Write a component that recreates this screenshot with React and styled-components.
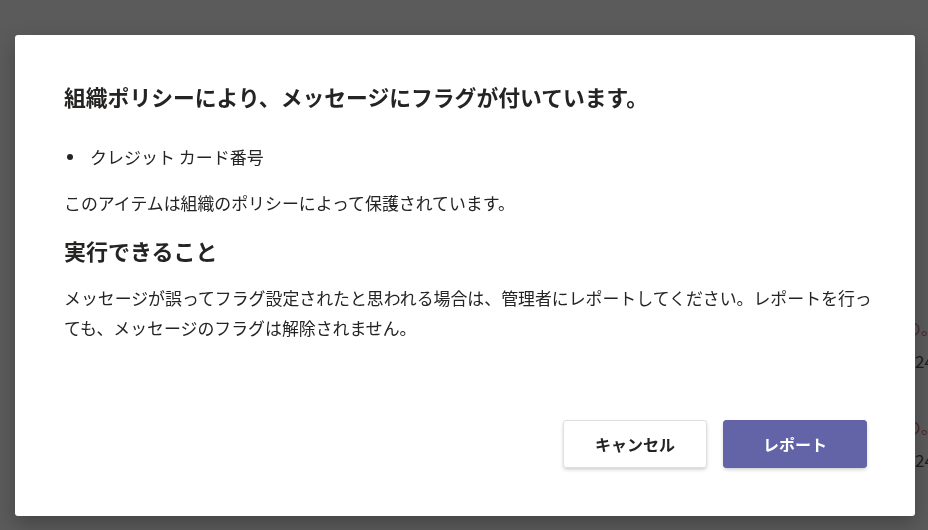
import React from "react";
import styled, { createGlobalStyle } from "styled-components";

const GlobalStyle = createGlobalStyle`
    html, body {
        margin: 0;
        padding: 0;
        width: 928px;
        height: 530px;
        overflow: hidden;
        background: #5b5b5b;
        font-family: "Noto Sans CJK JP", "Noto Sans", sans-serif;
        color: #252423;
    }
`

// dimmed page content peeking out behind the dialog
const BehindPage = styled.div`
    width: 928px;
    height: 530px;
    box-sizing: border-box;
    padding: 314px 0 0 904px;
    overflow: hidden;
    white-space: nowrap;
    font-size: 17px;
`

const BehindLine = styled.div`
    height: 33px;
    line-height: 28px;
    padding-left: ${p => p.$accent ? 0 : 11}px;
    color: ${p => p.$accent ? "#4a2a2c" : "#1c1c1c"};
    margin-bottom: ${p => p.$gap ? "33px" : "0"};
`

const Overlay = styled.div`
    position: fixed;
    inset: 0;
    box-sizing: border-box;
    padding: 35px 13px 14px 15px;
    display: flex;
`

const Dialog = styled.div`
    flex: 1;
    background: #fff;
    border-radius: 3px;
    box-shadow: 0 8px 20px rgba(0, 0, 0, .25);
    padding: 48px 48px 48px 49px;
    display: flex;
    flex-direction: column;
`

const Title = styled.h1`
    margin: 0;
    font-size: 21.8px;
    line-height: 28px;
    font-weight: 700;
`

const List = styled.ul`
    list-style: none;
    margin: 34px 0 0;
    padding: 0;
`

const ListItem = styled.li`
    font-size: 17px;
    line-height: 24px;
    padding-left: 26px;
    position: relative;

    &::before {
        content: "";
        position: absolute;
        left: 3px;
        top: 9px;
        width: 6px;
        height: 6px;
        border-radius: 50%;
        background: #252423;
    }
`

const Text = styled.p`
    margin: ${p => p.$top || 0}px -8px 0 0;
    font-size: 16.9px;
    line-height: ${p => p.$lh || 24}px;
`

const Heading = styled.h2`
    margin: 20px 0 0;
    font-size: 22px;
    line-height: 30px;
    font-weight: 700;
`

const Footer = styled.div`
    margin-top: auto;
    display: flex;
    justify-content: flex-end;
    gap: 16px;
`

const Button = styled.button`
    width: 144px;
    height: 48px;
    border-radius: 3px;
    font-family: inherit;
    font-size: 16px;
    font-weight: 700;
    cursor: pointer;
    border: 1px solid ${p => p.$primary ? "#6264a7" : "#e1dfdd"};
    background: ${p => p.$primary ? "#6264a7" : "#fff"};
    color: ${p => p.$primary ? "#fff" : "#252423"};
    box-shadow: 0 2px 4px -1px rgba(0, 0, 0, .25);
`

export default function App() {
    return (
        <>
            <GlobalStyle />
            <BehindPage>
                <BehindLine $accent>の。</BehindLine>
                <BehindLine $gap>24</BehindLine>
                <BehindLine $accent>の。</BehindLine>
                <BehindLine>24</BehindLine>
            </BehindPage>
            <Overlay>
                <Dialog>
                    <Title>組織ポリシーにより、メッセージにフラグが付いています。</Title>
                    <List>
                        <ListItem>クレジット カード番号</ListItem>
                    </List>
                    <Text $top={22}>このアイテムは組織のポリシーによって保護されています。</Text>
                    <Heading>実行できること</Heading>
                    <Text $top={18} $lh={30}>
                        メッセージが誤ってフラグ設定されたと思われる場合は、管理者にレポートしてください。レポートを行っても、メッセージのフラグは解除されません。
                    </Text>
                    <Footer>
                        <Button>キャンセル</Button>
                        <Button $primary>レポート</Button>
                    </Footer>
                </Dialog>
            </Overlay>
        </>
    )
}
